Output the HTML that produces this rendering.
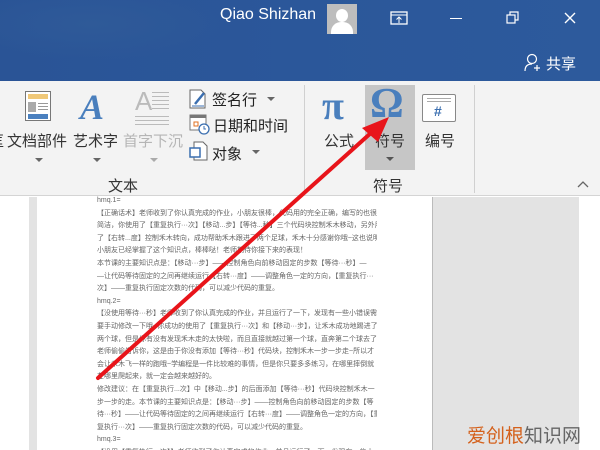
<!DOCTYPE html>
<html style="width:600px;height:450px;overflow:hidden"><head><meta charset="utf-8"><style>
*{margin:0;padding:0;box-sizing:border-box}
body{width:600px;height:450px;overflow:hidden;position:relative;background:#fff;font-family:"Liberation Sans","Noto Sans CJK SC",sans-serif}
.a{position:absolute}
#title{left:0;top:0;width:600px;height:81px;background:linear-gradient(90deg,#2a5496,#2b579a 50%,#2d5a9c)}
#rib{left:0;top:81px;width:600px;height:115px;background:#f3f3f3;border-bottom:1px solid #d4d4d4}
.lbl{font-size:15px;color:#333;white-space:nowrap}
.sm{font-size:15px;color:#222}
.doc p{font-size:7px;line-height:12.6px;color:#666;font-family:"Liberation Sans","Noto Sans CJK SC",sans-serif;white-space:nowrap;overflow:hidden;height:12.6px}
</style></head><body>
<div id="title" class="a"></div>
<div class="a" style="left:0;top:0;width:230px;height:60px;background:radial-gradient(ellipse at 40% 40%,#2f5a98,transparent 70%)"></div>
<div class="a" style="left:220px;top:6px;color:#fff;font-size:16px">Qiao Shizhan</div>
<div class="a" style="left:327px;top:4px;width:30px;height:30px;background:#bdbdbd;overflow:hidden">
<div class="a" style="left:9px;top:5px;width:12px;height:13px;border-radius:50%;background:#fff"></div>
<div class="a" style="left:4px;top:18px;width:22px;height:16px;border-radius:10px 10px 0 0;background:#fff"></div></div>
<svg class="a" style="left:390px;top:10px" width="20" height="16"><rect x="1" y="2" width="16" height="12" fill="none" stroke="#fff" stroke-width="1.3"/><line x1="1" y1="5" x2="17" y2="5" stroke="#fff"/><path d="M9 13V7M6.5 9.5L9 7l2.5 2.5" fill="none" stroke="#fff"/></svg>
<div class="a" style="left:450px;top:18px;width:12px;height:1px;background:#fff"></div>
<svg class="a" style="left:506px;top:11px" width="14" height="14"><rect x="1" y="4" width="8" height="8" fill="none" stroke="#fff" stroke-width="1.2"/><path d="M4 4V1h8v8H9" fill="none" stroke="#fff" stroke-width="1.2"/></svg>
<svg class="a" style="left:564px;top:12px" width="12" height="12"><path d="M1 1L11 11M11 1L1 11" stroke="#fff" stroke-width="1.4"/></svg>
<svg class="a" style="left:524px;top:53px" width="18" height="20"><circle cx="8" cy="6" r="4.5" fill="none" stroke="#fff" stroke-width="1.2"/><path d="M1 18c0-5 3-7 7-7" fill="none" stroke="#fff" stroke-width="1.2"/><path d="M13 12v6M10 15h6" stroke="#fff" stroke-width="1.2"/></svg>
<div class="a" style="left:546px;top:53px;color:#fff;font-size:15px">共享</div>

<div id="rib" class="a"></div>
<div class="a" style="left:25px;top:91px;width:26px;height:30px;border:1px solid #777;background:#fff">
<div class="a" style="left:2px;top:2px;width:20px;height:5px;background:#f0c878"></div>
<div class="a" style="left:2px;top:10px;width:8px;height:10px;background:#aaa"></div>
<div class="a" style="left:12px;top:11px;width:10px;height:1px;background:#999"></div>
<div class="a" style="left:12px;top:14px;width:10px;height:1px;background:#999"></div>
<div class="a" style="left:12px;top:17px;width:10px;height:1px;background:#999"></div>
<div class="a" style="left:2px;top:22px;width:20px;height:5px;background:#4a80bf"></div></div>
<div class="a lbl" style="left:-11px;top:130px">匡</div>
<div class="a lbl" style="left:7px;top:130px">文档部件</div>
<div class="a" style="left:80px;top:86px;font-size:36px;color:#4a7fbd;font-style:italic;font-weight:bold;font-family:'Liberation Serif',serif">A</div>
<div class="a lbl" style="left:73px;top:130px">艺术字</div>
<div class="a" style="left:135px;top:86px;font-size:26px;color:#bbb">A</div>
<div class="a" style="left:152px;top:92px;width:17px;height:20px;background:repeating-linear-gradient(#bbb 0 1px,transparent 1px 4px)"></div>
<div class="a" style="left:135px;top:116px;width:34px;height:10px;background:repeating-linear-gradient(#bbb 0 1px,transparent 1px 4px)"></div>
<div class="a lbl" style="left:123px;top:130px;color:#b5b5b5">首字下沉</div>
<div class="a" style="left:35px;top:158px;border:4px solid transparent;border-top:4px solid #666"></div>
<div class="a" style="left:93px;top:158px;border:4px solid transparent;border-top:4px solid #666"></div>
<div class="a" style="left:150px;top:158px;border:4px solid transparent;border-top:4px solid #aaa"></div>
<svg class="a" style="left:189px;top:89px" width="20" height="20"><path d="M1 1h11l4 4v14H1z" fill="#fff" stroke="#666"/><path d="M6 15l9-11" stroke="#3b6fb0" stroke-width="2.5"/><path d="M3 17h12" stroke="#3b6fb0"/></svg>
<div class="a sm" style="left:212px;top:89px">签名行</div>
<div class="a" style="left:267px;top:97px;border:4px solid transparent;border-top:4px solid #666"></div>
<svg class="a" style="left:189px;top:114px" width="21" height="21"><rect x="1" y="1" width="16" height="15" fill="#fff" stroke="#777"/><rect x="1" y="1" width="16" height="3" fill="#777"/><rect x="5" y="8" width="4" height="4" fill="none" stroke="#e07020"/><circle cx="15" cy="15" r="5" fill="#fff" stroke="#3b6fb0" stroke-width="1.3"/><path d="M15 12v3h2" stroke="#3b6fb0" fill="none"/></svg>
<div class="a sm" style="left:213px;top:115px">日期和时间</div>
<svg class="a" style="left:189px;top:141px" width="20" height="20"><path d="M5 1h9l4 4v14H5z" fill="#fff" stroke="#666"/><rect x="1" y="7" width="10" height="9" fill="#fff" stroke="#3b6fb0" stroke-width="1.5"/></svg>
<div class="a sm" style="left:212px;top:143px">对象</div>
<div class="a" style="left:252px;top:150px;border:4px solid transparent;border-top:4px solid #666"></div>
<div class="a lbl" style="left:108px;top:175px">文本</div>
<div class="a" style="left:304px;top:85px;width:1px;height:108px;background:#d0d0d0"></div>
<div class="a" style="left:474px;top:85px;width:1px;height:108px;background:#d0d0d0"></div>
<div class="a" style="left:322px;top:82px;font-size:40px;color:#4a7fbd;font-weight:bold;font-family:'Liberation Serif',serif">π</div>
<div class="a lbl" style="left:324px;top:130px">公式</div>
<div class="a" style="left:365px;top:85px;width:50px;height:85px;background:#c6c6c6"></div>
<div class="a" style="left:370px;top:80px;font-size:42px;color:#4a7fbd;font-weight:bold;font-family:'Liberation Serif',serif">Ω</div>
<div class="a lbl" style="left:375px;top:130px">符号</div>
<div class="a" style="left:386px;top:157px;border:4px solid transparent;border-top:4px solid #555"></div>
<div class="a" style="left:422px;top:94px;width:34px;height:28px;border:1px solid #888;background:#fff;border-radius:2px">
<div class="a" style="left:4px;top:3px;width:24px;height:1px;background:#aaa"></div>
<div class="a" style="left:4px;top:6px;width:24px;height:1px;background:#aaa"></div>
<div class="a" style="left:11px;top:8px;font-size:14px;color:#3b6fb0;font-weight:bold">#</div></div>
<div class="a lbl" style="left:425px;top:130px">编号</div>
<div class="a lbl" style="left:373px;top:175px">符号</div>
<svg class="a" style="left:577px;top:180px" width="12" height="8"><path d="M1 7l5-5 5 5" fill="none" stroke="#666" stroke-width="1.3"/></svg>

<div class="a" style="left:29px;top:197px;width:8px;height:253px;background:#e3e3e3"></div>
<div class="a" style="left:432px;top:197px;width:1px;height:253px;background:#bbb"></div>
<div class="a" style="left:433px;top:197px;width:146px;height:253px;background:#e3e3e3"></div>
<div class="a doc" style="left:97px;top:195px;width:280px;height:255px;overflow:hidden">
<p>hmq.1=</p>
<p>【正确话术】老师收到了你认真完成的作业，小朋友很棒，代码用的完全正确，编写的也很</p>
<p>简洁，你使用了【重复执行···次】【移动...步】【等待...秒】三个代码块控制禾木移动，另外用到</p>
<p>了【右转...度】控制禾木转向，成功帮助禾木跟进了两个足球，禾木十分感谢你哦~这也说明</p>
<p>小朋友已经掌握了这个知识点，棒棒哒！老师期待你接下来的表现！</p>
<p>本节课的主要知识点是：【移动···步】——控制角色向前移动固定的步数【等待···秒】—</p>
<p>—让代码等待固定的之间再继续运行【右转···度】——调整角色一定的方向，【重复执行···</p>
<p>次】——重复执行固定次数的代码，可以减少代码的重复。</p>
<p>hmq.2=</p>
<p>【没使用等待···秒】老师收到了你认真完成的作业，并且运行了一下，发现有一些小错误需</p>
<p>要手动修改一下哦~你成功的使用了【重复执行···次】和【移动···步】，让禾木成功地踢进了</p>
<p>两个球，但是你有没有发现禾木走的太快啦，而且直接就越过第一个球，直奔第二个球去了？</p>
<p>老师偷偷告诉你，这是由于你没有添加【等待···秒】代码块，控制禾木一步一步走~所以才</p>
<p>会让禾木飞一样的跑哦~学编程是一件比较难的事情，但是你只要多多练习，在哪里摔倒就</p>
<p>在哪里爬起来，就一定会越来越好的。</p>
<p>修改建议：在【重复执行...次】中【移动...步】的后面添加【等待···秒】代码块控制禾木一</p>
<p>步一步的走。本节课的主要知识点是：【移动···步】——控制角色向前移动固定的步数【等</p>
<p>待···秒】——让代码等待固定的之间再继续运行【右转···度】——调整角色一定的方向，【重</p>
<p>复执行···次】——重复执行固定次数的代码，可以减少代码的重复。</p>
<p>hmq.3=</p>
<p>【没用【重复执行···次】】老师收到了你认真完成的作业，并且运行了一下，发现有一些小</p>
<p>错误需要手动修改一下哦~你使用了【移动···步】【右转···度】和【等待···秒】来控制禾木踢</p>
<p>进了两个球，但是你有没有觉得你编写的代码有点太长了呢？老师偷偷告诉你哦，这是因为</p>
<p>你没有使用【重复执行···次】哦，这样子就会让代码显得很长哦~可以试着使用【重复执行···</p>
</div>
<div class="a" style="left:579px;top:197px;width:21px;height:253px;background:#fff"></div>
<svg class="a" style="left:0;top:0" width="600" height="450"><line x1="98" y1="378" x2="372" y2="132" stroke="#e8141a" stroke-width="4" stroke-linecap="round"/><path d="M389 117L362 128L378 142Z" fill="#e8141a"/></svg>
<div class="a" style="left:467px;top:427px;font-size:19px;line-height:20px;height:22px;white-space:nowrap"><span style="color:#d4611c">爱创根</span><span style="color:#666">知识网</span></div>
</body></html>
